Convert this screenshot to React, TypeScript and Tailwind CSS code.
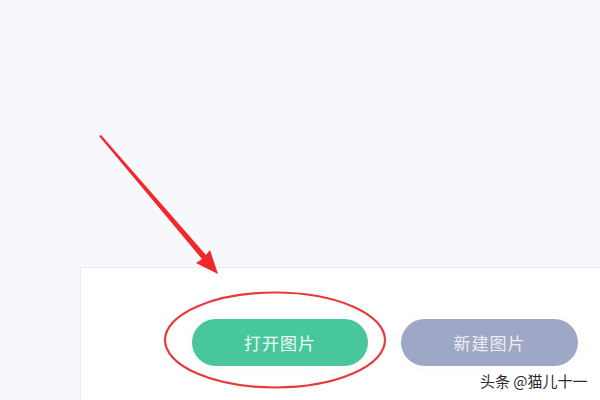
export default function App() {
    return (
        <div className="relative w-[600px] h-[400px] overflow-hidden bg-[#f7f8fc] flex flex-col font-['Noto_Sans_CJK_SC',sans-serif]">
            {/* content panel */}
            <div className="mt-[267px] ml-[80px] flex-1 bg-white border-t border-l border-[#ebecf0]">
                <div className="flex gap-[33px] pl-[111px] pt-[51px]">
                    <button className="w-[176px] h-[47px] rounded-full bg-[#47c79a] text-white/90 text-[17px] tracking-[1px] ring-[3px] ring-white shadow-[0_0_6px_rgba(0,0,0,0.12)]">
                        打开图片
                    </button>
                    <button className="w-[177px] h-[47px] rounded-full bg-[#9fa7c7] text-white/80 text-[17px] tracking-[1px] ring-[3px] ring-white shadow-[0_0_6px_rgba(0,0,0,0.12)]">
                        新建图片
                    </button>
                </div>
            </div>

            {/* annotation: arrow + ellipse */}
            <svg className="absolute inset-0 pointer-events-none" width="600" height="400" viewBox="0 0 600 400">
                <polygon points="99,136 101,135 206,255 210,250 218,274 196,263 202,259" fill="#f2262b" />
                <ellipse cx="275" cy="340" rx="110" ry="47.5" fill="none" stroke="#e8393d" strokeWidth="2.2" />
            </svg>

            {/* watermark */}
            <div className="absolute left-[480px] top-[370px] text-[15px] text-[#2a2a2a] [text-shadow:0_0_2px_#fff]">
                头条 @猫儿十一
            </div>
        </div>
    );
}
